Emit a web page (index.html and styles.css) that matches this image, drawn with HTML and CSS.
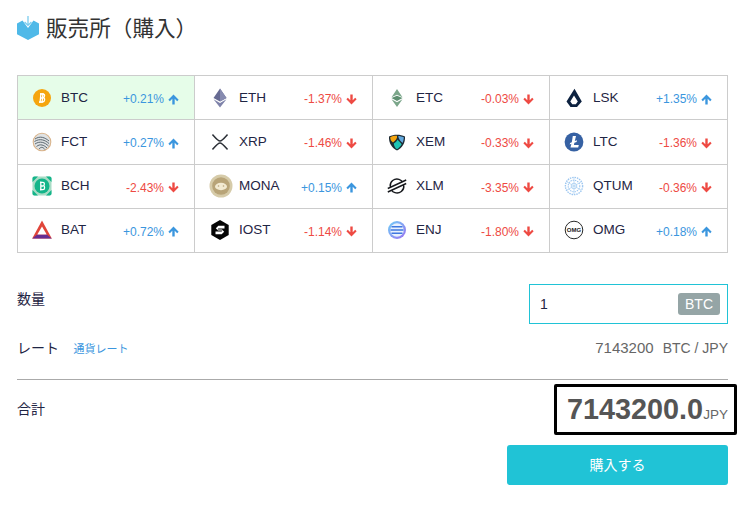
FILE: index.html
```html
<!DOCTYPE html>
<html lang="ja">
<head>
    <meta charset="UTF-8">
    <meta name="viewport" content="width=device-width, initial-scale=1.0">
    <title>販売所（購入）</title>
    <link rel="stylesheet" href="styles.css">
</head>
<body>
    <svg width="0" height="0" class="defs">
        <symbol id="up" viewBox="0 0 12 12"><path d="M6 .6 11.6 6.200 10 7.800 7.300 5.100V11.400H4.700V5.100L2 7.800 .4 6.200Z"/></symbol>
        <symbol id="down" viewBox="0 0 12 12"><path d="M6 11.400 .4 5.800 2 4.200 4.700 6.900V.6H7.300V6.900L10 4.200 11.600 5.800Z"/></symbol>
        <linearGradient id="enj-ring" x1="0" y1="0" x2="1" y2="1">
            <stop offset="0" stop-color="#6fd0f7"/>
            <stop offset="1" stop-color="#9a6ff0"/>
        </linearGradient>
    </svg>

    <h1 class="title">
        <svg class="title-icon" viewBox="0 0 22 24">
            <path d="M0 7.500 5.500 4.600 11 12 16.500 4.600 22 7.500V18.200L11 24 0 18.200Z" fill="#4fb9e8"/>
            <path d="M11 0V9M7.600 6 11 9.400 14.400 6" fill="none" stroke="#7accef" stroke-width="1.300"/>
        </svg>
        <span class="title-text">販売所（購入）</span>
    </h1>

    <div class="coins">
        <div class="coin active">
            <svg class="coin-icon" viewBox="0 0 20 20"><circle cx="10" cy="10" r="9" fill="#f5a50f"/><path d="M8 6H11C13.200 6 13 9.300 11 9.700 13.400 10 13 14 10.500 14H7M9 5 8 15M11 5 10 15M8.500 10H11" fill="none" stroke="#fff" stroke-width="1.300"/></svg>
            <span class="coin-name">BTC</span>
            <span class="rate up">+0.21%<svg class="arrow"><use href="#up"/></svg></span>
        </div>
        <div class="coin">
            <svg class="coin-icon" viewBox="0 0 20 20"><path d="M10 .5 3.500 10 10 13.500 16.500 10Z" fill="#666a92"/><path d="M10 .5V13.500L16.500 10Z" fill="#878bb0"/><path d="M3.500 11.300 10 19.500 16.500 11.300 10 15Z" fill="#7f83aa"/></svg>
            <span class="coin-name">ETH</span>
            <span class="rate down">-1.37%<svg class="arrow"><use href="#down"/></svg></span>
        </div>
        <div class="coin">
            <svg class="coin-icon" viewBox="0 0 20 20"><path d="M10 1 4.500 9.300 10 6.800 15.500 9.300Z" fill="#7ba68a"/><path d="M4.500 10 10 7.800 15.500 10 10 13Z" fill="#5d8f70"/><path d="M4.500 11.300 10 19 15.500 11.300 10 14.300Z" fill="#7ba68a"/></svg>
            <span class="coin-name">ETC</span>
            <span class="rate down">-0.03%<svg class="arrow"><use href="#down"/></svg></span>
        </div>
        <div class="coin">
            <svg class="coin-icon" viewBox="0 0 20 20"><path d="M10.500 .8 17.800 13.500 13 19H6.500L2.500 13.500ZM10 7.500 6.300 13.500 8.300 16.200H11.800L13.800 13.500Z" fill="#0d2240" fill-rule="evenodd"/></svg>
            <span class="coin-name">LSK</span>
            <span class="rate up">+1.35%<svg class="arrow"><use href="#up"/></svg></span>
        </div>

        <div class="coin">
            <svg class="coin-icon" viewBox="0 0 20 20"><circle cx="10" cy="10" r="8.800" fill="#dfe2e3" stroke="#d9b48c" stroke-width="1.100"/><path d="M3 7C8 3.500 13 5.500 17 9M2.500 9.500C8 6 13 8 17 11.500M3 12C8 8.500 13 10.500 16.500 14M4.500 14.500C8 11.500 12 13 15 16M7 17C9 14.500 11 15 13 17.500" fill="none" stroke="#4d5a64" stroke-width=".9"/></svg>
            <span class="coin-name">FCT</span>
            <span class="rate up">+0.27%<svg class="arrow"><use href="#up"/></svg></span>
        </div>
        <div class="coin">
            <svg class="coin-icon" viewBox="0 0 20 20"><path d="M2.500 2.500C6 6.500 8 9 10 9S14 6.500 17.500 2.500M2.500 17.500C6 13.500 8 11 10 11S14 13.500 17.500 17.500" fill="none" stroke="#2b2f36" stroke-width="1.500"/></svg>
            <span class="coin-name">XRP</span>
            <span class="rate down">-1.46%<svg class="arrow"><use href="#down"/></svg></span>
        </div>
        <div class="coin">
            <svg class="coin-icon" viewBox="0 0 20 20"><path d="M2 4.500C7 2 13 2 18 4.500 18.500 11 15 16 10 18.500 5 16 1.500 11 2 4.500Z" fill="#1d2a33"/><path d="M3.200 5.300C5.500 4 8 3.600 10 3.800 10.500 6 9 8.500 6 10.500 4.300 9.500 3.300 8 3.200 5.300Z" fill="#f5a50f"/><path d="M11.300 3.900C13 3.900 15 4.500 16.800 5.300 16.800 7.500 16.300 9.500 15.500 11 14 9 11.500 7.500 11.300 3.900Z" fill="#62a8de"/><path d="M6.800 11.500C9 10 10 9 10.600 7.500 11.500 9 13.500 10.500 14.700 12.300 13.500 14.500 12 16 10 17.200 8 16 7 14 6.800 11.500Z" fill="#1fc4b4"/></svg>
            <span class="coin-name">XEM</span>
            <span class="rate down">-0.33%<svg class="arrow"><use href="#down"/></svg></span>
        </div>
        <div class="coin">
            <svg class="coin-icon" viewBox="0 0 20 20"><circle cx="10" cy="10" r="9.400" fill="#3661a3"/><path d="M8.800 4H12L10.800 9.100 13 8.300 12.600 9.900 10.400 10.700 9.900 13H14.800L14.200 15.500H6.500L7.400 11.800 5.700 12.400 6.100 11 7.800 10.300Z" fill="#fff"/></svg>
            <span class="coin-name">LTC</span>
            <span class="rate down">-1.36%<svg class="arrow"><use href="#down"/></svg></span>
        </div>

        <div class="coin">
            <svg class="coin-icon" viewBox="0 0 20 20"><rect x=".5" y=".5" width="19" height="19" rx="2" fill="#a8dcc5"/><path d="M.5 6V2.500C.5 1.200 1.200 .5 2.500 .5H6ZM19.500 6V2.500C19.500 1.200 18.800 .5 17.500 .5H14ZM.5 14V17.500C.5 18.800 1.200 19.500 2.500 19.500H6ZM19.500 14V17.500C19.500 18.800 18.800 19.500 17.500 19.500H14Z" fill="#14b58a"/><circle cx="10" cy="10" r="7.500" fill="#14b58a"/><path d="M8 6.300H11C12.800 6.300 12.800 9.400 11.200 9.700 13.200 10 13 13.700 11 13.700H8M8.800 5.500V14.500M8.500 10H11" fill="none" stroke="#fff" stroke-width="1.300"/></svg>
            <span class="coin-name">BCH</span>
            <span class="rate down">-2.43%<svg class="arrow"><use href="#down"/></svg></span>
        </div>
        <div class="coin">
            <svg class="coin-icon mona" viewBox="0 0 24 24"><circle cx="12" cy="12" r="11.500" fill="#d6cba9"/><circle cx="12" cy="12" r="8.800" fill="#b8a478"/><ellipse cx="12" cy="12.500" rx="6" ry="3.700" fill="#f2ead2"/><circle cx="9.500" cy="12" r=".8" fill="#b8a478"/><circle cx="14.500" cy="12" r=".8" fill="#b8a478"/></svg>
            <span class="coin-name">MONA</span>
            <span class="rate up">+0.15%<svg class="arrow"><use href="#up"/></svg></span>
        </div>
        <div class="coin">
            <svg class="coin-icon" viewBox="0 0 20 20"><path d="M3.200 10.500C2.600 5.500 7.500 1.900 12 3.300 13.500 3.800 14.800 4.700 15.600 5.900M16.800 9.500C17.400 14.500 12.500 18.100 8 16.700 6.500 16.200 5.200 15.300 4.400 14.100M.8 12.500 19.200 4M.8 16 19.200 7.500" fill="none" stroke="#16181c" stroke-width="1.400"/></svg>
            <span class="coin-name">XLM</span>
            <span class="rate down">-3.35%<svg class="arrow"><use href="#down"/></svg></span>
        </div>
        <div class="coin">
            <svg class="coin-icon" viewBox="0 0 20 20"><circle cx="10" cy="10" r="8.600" fill="none" stroke="#9cc6f0" stroke-width="1.400" stroke-dasharray="1.500 .9"/><circle cx="10" cy="10" r="5.800" fill="none" stroke="#9cc6f0" stroke-width="1.100" stroke-dasharray="1.400 .9"/><circle cx="10" cy="10" r="2.800" fill="none" stroke="#b4d5f4" stroke-width="1"/><path d="M10 1.500V18.500M2.700 5.800 17.300 14.200M2.700 14.200 17.300 5.800" stroke="#b4d5f4" stroke-width=".8"/></svg>
            <span class="coin-name">QTUM</span>
            <span class="rate down">-0.36%<svg class="arrow"><use href="#down"/></svg></span>
        </div>

        <div class="coin">
            <svg class="coin-icon" viewBox="0 0 20 20"><path d="M10 .5 19.800 18.500H.2Z" fill="#e0453a"/><path d="M5.300 14.500H14.700L19.800 18.500H.2Z" fill="#662d91"/><path d="M10 6.500 14.700 14.500H5.300Z" fill="#fff"/></svg>
            <span class="coin-name">BAT</span>
            <span class="rate up">+0.72%<svg class="arrow"><use href="#up"/></svg></span>
        </div>
        <div class="coin">
            <svg class="coin-icon" viewBox="0 0 20 20"><path d="M10 0 18.700 5V15L10 20 1.300 15V5Z" fill="#050505"/><path d="M14.500 5.800H8.300L5.800 8.300 8 10.500H12.500L11.700 11.500H5.500V14.200H11.700L14.200 11.700 12 9.500H7.500L8.300 8.500H14.500Z" fill="#fff"/></svg>
            <span class="coin-name">IOST</span>
            <span class="rate down">-1.14%<svg class="arrow"><use href="#down"/></svg></span>
        </div>
        <div class="coin">
            <svg class="coin-icon" viewBox="0 0 20 20"><circle cx="10" cy="10" r="9" fill="url(#enj-ring)"/><circle cx="10" cy="10" r="6.800" fill="#e8f1fd"/><path d="M4.500 6.700H15.500M3.500 10H16.500M4.500 13.300H15.500" stroke="#3f78e0" stroke-width="1.600"/></svg>
            <span class="coin-name">ENJ</span>
            <span class="rate down">-1.80%<svg class="arrow"><use href="#down"/></svg></span>
        </div>
        <div class="coin">
            <svg class="coin-icon" viewBox="0 0 20 20"><circle cx="10" cy="10" r="8.800" fill="none" stroke="#2a2a2a" stroke-width="1"/><text x="10" y="12" text-anchor="middle" class="omg-text">OMG</text></svg>
            <span class="coin-name">OMG</span>
            <span class="rate up">+0.18%<svg class="arrow"><use href="#up"/></svg></span>
        </div>
    </div>

    <div class="row amount-row">
        <span class="label">数量</span>
        <div class="amount-box">
            <span class="amount-value">1</span>
            <span class="amount-unit">BTC</span>
        </div>
    </div>

    <div class="row rate-row">
        <div>
            <span class="label">レート</span>
            <a class="rate-link" href="#">通貨レート</a>
        </div>
        <div class="rate-value">7143200<span class="pair">BTC / JPY</span></div>
    </div>

    <div class="row total-row">
        <span class="label total-label">合計</span>
        <div class="total">7143200.0<span class="total-unit">JPY</span></div>
    </div>

    <div class="actions">
        <button class="buy-btn">購入する</button>
    </div>
</body>
</html>
```

FILE: styles.css
```css
body {
    font-family: "Liberation Sans", "Noto Sans CJK JP", sans-serif;
    background-color: #fff;
    color: #1f2544;
    margin: 0;
    padding: 0 15px 0 17px;
    overflow-x: hidden;
}

.defs {
    display: block;
    height: 0;
}

.title {
    display: flex;
    align-items: center;
    gap: 7px;
    height: 56px;
    margin: 0 0 19px;
    font-size: 21.6px;
    font-weight: 400;
    color: #333;
}

.title-icon {
    width: 22px;
    height: 24px;
}

.title-text {
    margin-top: -4px;
}

.coins {
    display: grid;
    grid-template-columns: 177px 178px 177px 178px;
    grid-auto-rows: 44.25px;
    border-top: 1px solid #ccc;
    border-left: 1px solid #ccc;
    width: 710px;
}

.coin {
    display: flex;
    align-items: center;
    border-right: 1px solid #ccc;
    border-bottom: 1px solid #ccc;
    padding: 0 15px 0 14px;
    font-size: 13.5px;
}

.coin:nth-child(4n+2) {
    padding-left: 15px;
}

.coin.active {
    background: #e6fde9;
}

.coin-icon {
    width: 20px;
    height: 20px;
    flex: none;
    margin-right: 9px;
}

.coin-icon.mona {
    width: 24px;
    height: 24px;
    margin-left: -1px;
    margin-right: 6px;
}

.omg-text {
    font-size: 6px;
    font-weight: 700;
    fill: #222;
}

.coin-name {
    margin-top: -1px;
}

.rate {
    display: flex;
    align-items: center;
    margin-left: auto;
    font-size: 12px;
    padding-top: 3px;
}

.rate.up {
    color: #3b96de;
    fill: #3b96de;
}

.rate.down {
    color: #ee4a43;
    fill: #ee4a43;
}

.arrow {
    width: 11px;
    height: 11px;
    margin-left: 4px;
}

.row {
    display: flex;
    justify-content: space-between;
}

.label {
    font-size: 14px;
}

.amount-row {
    margin-top: 31px;
    width: 711px;
}

.amount-row .label {
    margin-top: 4px;
}

.amount-box {
    box-sizing: border-box;
    display: flex;
    align-items: center;
    justify-content: space-between;
    width: 199px;
    height: 40px;
    border: 1px solid #20c3d6;
    padding: 0 7px 0 10px;
    font-size: 14px;
}

.amount-unit {
    background: #95a5a6;
    color: #fff;
    border-radius: 3px;
    padding: 2px 7px;
    line-height: 18px;
}

.rate-row {
    align-items: center;
    margin-top: 12px;
    width: 711px;
    height: 22px;
}

.rate-link {
    margin-left: 10px;
    font-size: 11px;
    color: #3b96de;
    text-decoration: none;
}

.rate-value {
    font-size: 15px;
    color: #666;
}

.pair {
    margin-left: 9px;
    font-size: 14px;
}

.total-row {
    border-top: 1px solid #aaa;
    margin-top: 21px;
    padding-top: 4px;
    width: 711px;
    align-items: center;
}

.total-label {
    margin-top: -3px;
}

.total {
    box-sizing: border-box;
    width: 183px;
    height: 51px;
    margin-right: -9px;
    border: 3px solid #000;
    border-radius: 2px;
    padding-left: 10px;
    font-size: 28.8px;
    font-weight: 700;
    line-height: 44px;
    color: #555;
    white-space: nowrap;
}

.total-unit {
    font-size: 13.5px;
    font-weight: 400;
    color: #666;
}

.actions {
    display: flex;
    justify-content: flex-end;
    width: 711px;
    margin-top: 10px;
}

.buy-btn {
    width: 221px;
    height: 40px;
    padding-bottom: 4px;
    background: #20c3d6;
    color: #fff;
    border: none;
    border-radius: 3px;
    font-family: inherit;
    font-size: 14px;
}
```
